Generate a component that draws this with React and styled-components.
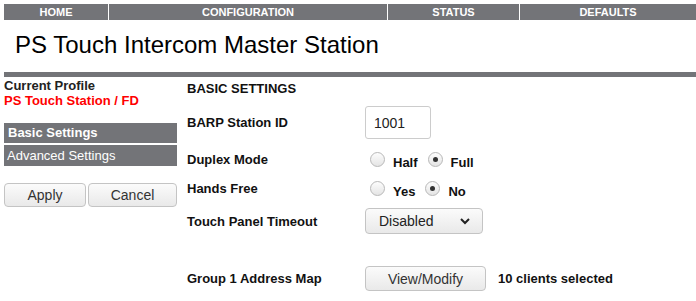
import React from 'react';
import styled, { createGlobalStyle } from 'styled-components';

const GlobalStyle = createGlobalStyle`
  body {
    margin: 0;
    background: #fff;
    font-family: "Liberation Sans", Arial, sans-serif;
    color: #111;
  }
`;

const tabs = [
  { label: 'HOME', width: 104 },
  { label: 'CONFIGURATION', width: 278 },
  { label: 'STATUS', width: 131 },
  { label: 'DEFAULTS', width: 176 },
];

export default function App() {
  return (
    <Page>
      <GlobalStyle />
      <NavBar>
        {tabs.map(t => (
          <NavTab key={t.label} $w={t.width}>
            {t.label}
          </NavTab>
        ))}
      </NavBar>
      <Title>PS Touch Intercom Master Station</Title>
      <Rule />
      <Body>
        <Sidebar>
          <ProfileLabel>Current Profile</ProfileLabel>
          <ProfileName>PS Touch Station / FD</ProfileName>
          <Menu>
            <MenuItem $active $h={20}>Basic Settings</MenuItem>
            <MenuItem $h={21}>Advanced Settings</MenuItem>
          </Menu>
          <ButtonRow>
            <Button $w={82}>Apply</Button>
            <Button $w={89}>Cancel</Button>
          </ButtonRow>
        </Sidebar>
        <Content>
          <Heading>BASIC SETTINGS</Heading>
          <Row $h={37} $mt={7}>
            <Label>BARP Station ID</Label>
            <TextInput>1001</TextInput>
          </Row>
          <Row $h={30} $mt={3}>
            <Label>Duplex Mode</Label>
            <Options>
              <Radio />
              <OptionText>Half</OptionText>
              <Radio $checked />
              <OptionText>Full</OptionText>
            </Options>
          </Row>
          <Row $h={29}>
            <Label>Hands Free</Label>
            <Options>
              <Radio />
              <OptionText>Yes</OptionText>
              <Radio $checked />
              <OptionText>No</OptionText>
            </Options>
          </Row>
          <Row $h={30} $mt={3}>
            <Label>Touch Panel Timeout</Label>
            <Select>
              <span>Disabled</span>
              <svg width="12" height="8" viewBox="0 0 12 8">
                <path d="M2 2l4 4 4-4" fill="none" stroke="#222" strokeWidth="2" />
              </svg>
            </Select>
          </Row>
          <Row $h={29} $mt={28}>
            <Label>Group 1 Address Map</Label>
            <Button $w={121} $h={25}>View/Modify</Button>
            <Note>10 clients selected</Note>
          </Row>
        </Content>
      </Body>
    </Page>
  );
}

const Page = styled.div`
  padding-left: 4px;
  width: 692px;
`;

const NavBar = styled.div`
  display: flex;
  margin-top: 4px;
  height: 16px;
  gap: 1px;
`;

const NavTab = styled.div`
  width: ${p => p.$w}px;
  flex: none;
  background: #737478;
  color: #fff;
  font-size: 11px;
  font-weight: bold;
  line-height: 16px;
  text-align: center;
`;

const Title = styled.h1`
  margin: 0;
  height: 52px;
  box-sizing: border-box;
  padding: 11px 0 0 11px;
  font-size: 24px;
  font-weight: normal;
  line-height: 28px;
  color: #000;
`;

const Rule = styled.div`
  height: 5px;
  background: #737478;
`;

const Body = styled.div`
  display: flex;
  gap: 10px;
`;

const Sidebar = styled.div`
  width: 173px;
  flex: none;
  padding-top: 1px;
`;

const ProfileLabel = styled.div`
  font-size: 13px;
  font-weight: bold;
  line-height: 15px;
  color: #222;
`;

const ProfileName = styled(ProfileLabel)`
  color: #f00;
`;

const Menu = styled.div`
  display: flex;
  flex-direction: column;
  gap: 2px;
  margin-top: 15px;
`;

const MenuItem = styled.div`
  height: ${p => p.$h}px;
  background: #737478;
  color: #fff;
  font-size: 13px;
  line-height: ${p => p.$h}px;
  font-weight: ${p => (p.$active ? 'bold' : 'normal')};
  padding-left: ${p => (p.$active ? 4 : 3)}px;
`;

const ButtonRow = styled.div`
  display: flex;
  gap: 2px;
  margin-top: 17px;
`;

const Button = styled.div`
  width: ${p => p.$w}px;
  height: ${p => p.$h || 24}px;
  box-sizing: border-box;
  border: 1px solid #c4c4c4;
  border-radius: 4px;
  background: linear-gradient(#fbfbfb, #e9e9e9);
  color: #333;
  font-size: 14px;
  display: flex;
  align-items: center;
  justify-content: center;
  flex: none;
`;

const Content = styled.div`
  flex: 1;
  padding-top: 3px;
`;

const Heading = styled.div`
  height: 17px;
  font-size: 13px;
  font-weight: bold;
  line-height: 17px;
  color: #111;
`;

const Row = styled.div`
  display: flex;
  align-items: center;
  height: ${p => p.$h}px;
  margin-top: ${p => p.$mt || 0}px;
`;

const Label = styled.div`
  width: 178px;
  flex: none;
  font-size: 13px;
  font-weight: bold;
  color: #111;
`;

const TextInput = styled.div`
  width: 66px;
  height: 33px;
  box-sizing: border-box;
  border: 1px solid #ccc;
  border-radius: 3px;
  padding-left: 8px;
  display: flex;
  align-items: center;
  font-size: 14px;
  color: #222;
`;

const Options = styled.div`
  display: flex;
  align-items: center;
  padding-left: 5px;
`;

const Radio = styled.span`
  width: 15px;
  height: 15px;
  box-sizing: border-box;
  border-radius: 50%;
  border: 1px solid #b8b8b8;
  background: linear-gradient(#fdfdfd, #e4e4e4);
  display: flex;
  align-items: center;
  justify-content: center;
  flex: none;
  &::after {
    content: '';
    width: 5px;
    height: 5px;
    border-radius: 50%;
    background: ${p => (p.$checked ? '#333' : 'transparent')};
  }
`;

const OptionText = styled.span`
  font-size: 13px;
  font-weight: bold;
  color: #111;
  padding: 6px 0 0 8px;
  margin-right: 10px;
`;

const Select = styled(Button)`
  width: 118px;
  height: 26px;
  justify-content: space-between;
  padding: 0 11px 0 13px;
  color: #222;
`;

const Note = styled.div`
  margin-left: 12px;
  font-size: 13px;
  font-weight: bold;
  color: #111;
`;
